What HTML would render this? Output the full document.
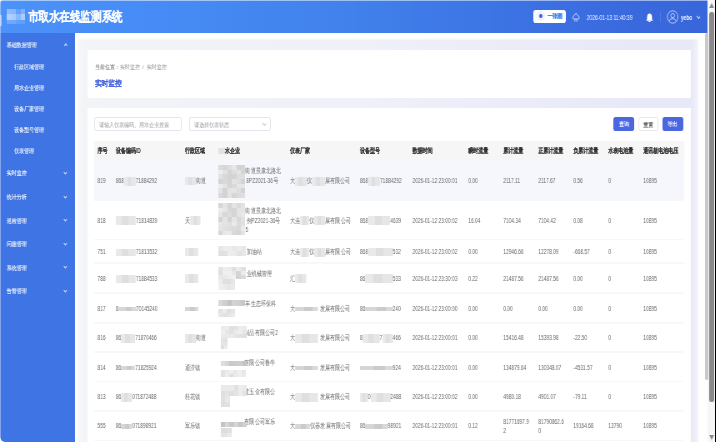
<!DOCTYPE html>
<html><head><meta charset="utf-8"><style>
*{margin:0;padding:0;box-sizing:border-box}
html,body{width:716px;height:442px;overflow:hidden;background:#fff;font-family:"Liberation Sans",sans-serif}
#wrap{position:absolute;left:0;top:0;width:859.2px;height:442px;transform:scaleX(0.833333);transform-origin:0 0;overflow:hidden;will-change:transform}
#wrap div{position:absolute}
#wrap div div{position:static}
svg{display:block}
.txt{white-space:nowrap}
#hdr{border-top-left-radius:4px;background:linear-gradient(90deg,#4b92f9 0%,#478cf6 22%,#4181eb 50%,#3c72e3 74%,#3a69de 90%,#3866db 100%)}
.title{font-size:12.5px;line-height:16px;letter-spacing:-0.45px;-webkit-text-stroke:0.12px #fff;color:#fff;white-space:nowrap;font-weight:bold}
.mi,.si{font-size:5.8px;line-height:10px;color:#fff;white-space:nowrap;-webkit-text-stroke:0.12px rgba(255,255,255,.7)}
.car{border-right:0.65px solid #d0dcfa;border-bottom:0.65px solid #d0dcfa;transform:rotate(45deg)}
.car.up{transform:rotate(225deg)}
.bc{font-size:5.8px;line-height:9px;color:#8e9196;white-space:nowrap}
.bc b{color:#5a5c60;font-weight:normal}
.pt{font-size:8.4px;line-height:10px;color:#4a66de;font-weight:bold;white-space:nowrap;-webkit-text-stroke:0.08px #4a66de}
.inp{border:0.7px solid #e2e5eb;border-radius:2.4px;background:#fff;font-size:5.7px;line-height:12.6px;color:#a4a7ad;-webkit-text-stroke:0.05px #a4a7ad;padding-left:5.4px;padding-top:0.6px;white-space:nowrap}
.btn{border-radius:2.8px;font-size:6px;line-height:15.6px;text-align:center;color:#fff;background:#4a67e0;-webkit-text-stroke:0.12px #fff}
.btn.w{background:#fff;color:#555;border:0.7px solid #e6e8ee;line-height:14.2px;color:#3a3a3a;-webkit-text-stroke:0.08px #3a3a3a}
.th,.td{display:flex;align-items:center;font-size:6.6px;line-height:9.7px;white-space:nowrap}
.th>div,.td>div{transform:scaleX(0.88);transform-origin:0 50%}
.th>div{transform:scaleX(0.86)}
.th{color:#303133;font-weight:bold;-webkit-text-stroke:0.04px #303133}
.td{color:#68696c}
.bl{display:inline-block;vertical-align:middle;background:#e2e2e2}
.bx{display:inline-block;vertical-align:middle;background:linear-gradient(90deg,#e9e9ea 0 30%,#dedfe0 30% 62%,#e6e6e7 62%)}
.bd{display:inline-block;vertical-align:middle;background:linear-gradient(90deg,#d6d6d8 0 40%,#cbcbcd 40% 75%,#d9d9db 75%)}
.rl{background:#f8f8f9}
.arr{width:0;height:0;border-left:3.12px solid transparent;border-right:3.12px solid transparent}
</style></head><body><div id="wrap">
<div style="left:0.0px;top:0px;width:849.0px;height:32.5px;"></div>
<div id="hdr" style="left:0;top:0;width:849.0px;height:32.5px"></div>
<div style="left:8.4px;top:9.2px;width:5.4px;height:4.7px;background:#8cbafc"></div><div style="left:13.8px;top:9.2px;width:5.4px;height:4.7px;background:#8ab8fc"></div><div style="left:19.2px;top:9.2px;width:5.4px;height:4.7px;background:#62a0f9"></div><div style="left:24.6px;top:9.2px;width:5.4px;height:4.7px;background:#80b2fb"></div><div style="left:8.4px;top:13.9px;width:5.4px;height:5.7px;background:#b0d0fe"></div><div style="left:13.8px;top:13.9px;width:5.4px;height:5.7px;background:#a6cafd"></div><div style="left:19.2px;top:13.9px;width:5.4px;height:5.7px;background:#88b7fb"></div><div style="left:24.6px;top:13.9px;width:5.4px;height:5.7px;background:#aacdfd"></div><div style="left:8.4px;top:19.6px;width:5.4px;height:4.9px;background:#72a8f9"></div><div style="left:13.8px;top:19.6px;width:5.4px;height:4.9px;background:#70a7f9"></div><div style="left:19.2px;top:19.6px;width:5.4px;height:4.9px;background:#62a0f9"></div><div style="left:24.6px;top:19.6px;width:5.4px;height:4.9px;background:#5f9ef9"></div><div style="left:0.0px;top:15px;width:2.4px;height:11px;background:#a0c4fb"></div>
<div class="title" style="left:33.72px;top:8.9px;height:16px;">市取水在线监测系统</div>
<div style="left:0.0px;top:0px;width:859.2px;height:0.8px;background:rgba(255,255,255,.5)"></div>
<div style="left:639.6px;top:9.6px;width:39.6px;height:13.6px;background:#fff;border-radius:2.8px"></div>
<div style="left:643.8px;top:11.2px;width:10.08px;height:10.2px;border-radius:50%;background:#f0f2fc"></div>
<div style="left:646.8px;top:14.1px;width:4.08px;height:4.4px;border-radius:50%;background:#4a5cdb"></div>
<div class="txt" style="left:656.76px;top:11.7px;height:9px;font-size:6px;line-height:9px;color:#3f86f0;font-weight:bold;-webkit-text-stroke:0.1px #3f86f0">一张图</div>
<div style="left:686.4px;top:12px;width:10.8px;height:11px"><svg width="10.8" height="11" viewBox="0 0 9 11" preserveAspectRatio="none"><path d="M4.3 1.3 L1.7 4.3 Q0.8 5.3 1.1 6.2 Q1.5 7.1 2.5 7.1 L6.2 7.1 Q7.3 7.1 7.6 6.2 Q7.9 5.3 6.9 4.3 Z" fill="none" stroke="#e3ebff" stroke-width="0.8" stroke-linejoin="round"/><path d="M3.1 7.3v2.5M4.35 7.3v2.5M5.6 7.3v2.5" stroke="#cfdcff" stroke-width="0.55"/></svg></div>
<div class="txt" style="left:703.92px;top:12.5px;height:9px;font-size:6.6px;line-height:9px;color:#f2f6ff;transform:scaleX(0.905);transform-origin:0 50%">2026-01-13 11:40:39</div>
<div style="left:768.6px;top:12px;width:0.6px;height:10px;background:rgba(255,255,255,.04)"></div>
<div style="left:774.96px;top:12.6px;width:8.88px;height:9.6px"><svg width="8.88" height="9.6" viewBox="0 0 8 10" preserveAspectRatio="none"><path d="M4 0.6 Q1.5 0.8 1.4 4 L1.2 6.9 L0.3 8 L7.7 8 L6.8 6.9 L6.6 4 Q6.5 0.8 4 0.6Z" fill="#fff"/><ellipse cx="4" cy="9" rx="1.1" ry="0.9" fill="#fff"/></svg></div>
<div style="left:792.24px;top:12px;width:0.6px;height:10px;background:rgba(255,255,255,.12)"></div>
<div style="left:799.92px;top:9.9px;width:14.4px;height:14px"><svg width="14.4" height="14" viewBox="0 0 12 14" preserveAspectRatio="none"><ellipse cx="6" cy="7" rx="5.3" ry="6.2" fill="none" stroke="#e3ebff" stroke-width="0.65"/><ellipse cx="6" cy="5.6" rx="1.9" ry="2.1" fill="none" stroke="#e3ebff" stroke-width="0.65"/><path d="M2.6 11 Q3 8.6 6 8.6 Q9 8.6 9.4 11" fill="none" stroke="#e3ebff" stroke-width="0.65"/></svg></div>
<div class="txt" style="left:816.96px;top:12.5px;height:9px;font-size:6.6px;line-height:9px;color:#f2f6ff;font-weight:bold;transform:scaleX(0.88);transform-origin:0 50%">yebo</div>
<div style="left:835.92px;top:14.6px;width:3.84px;height:3.2px;border-right:0.5px solid #c9d6fb;border-bottom:0.5px solid #c9d6fb;transform:rotate(45deg)"></div>
<div style="left:0.0px;top:32.5px;width:89.7px;height:410px;background:#3e74e4"></div>
<div class="mi" style="left:8.4px;top:40px;height:10px;">基础数据管理</div>
<div class="car up" style="left:77.04px;top:44px;width:3.36px;height:2.8px;"></div>
<div class="si" style="left:16.8px;top:61.599999999999994px;height:10px;">行政区域管理</div>
<div class="si" style="left:16.8px;top:82.7px;height:10px;">用水企业管理</div>
<div class="si" style="left:16.8px;top:103.8px;height:10px;">设备厂家管理</div>
<div class="si" style="left:16.8px;top:124.9px;height:10px;">设备型号管理</div>
<div class="si" style="left:16.8px;top:145.5px;height:10px;">仪表管理</div>
<div class="mi" style="left:8.4px;top:168.2px;height:10px;">实时监控</div>
<div class="car" style="left:77.16px;top:170.79999999999998px;width:3.12px;height:2.6px;"></div>
<div class="mi" style="left:8.4px;top:192px;height:10px;">统计分析</div>
<div class="car" style="left:77.16px;top:194.6px;width:3.12px;height:2.6px;"></div>
<div class="mi" style="left:8.4px;top:215.6px;height:10px;">巡检管理</div>
<div class="car" style="left:77.16px;top:218.2px;width:3.12px;height:2.6px;"></div>
<div class="mi" style="left:8.4px;top:239px;height:10px;">问题管理</div>
<div class="car" style="left:77.16px;top:241.6px;width:3.12px;height:2.6px;"></div>
<div class="mi" style="left:8.4px;top:262.5px;height:10px;">系统管理</div>
<div class="car" style="left:77.16px;top:265.1px;width:3.12px;height:2.6px;"></div>
<div class="mi" style="left:8.4px;top:286.1px;height:10px;">告警管理</div>
<div class="car" style="left:77.16px;top:288.70000000000005px;width:3.12px;height:2.6px;"></div>
<div style="left:0.0px;top:0px;width:1.2px;height:442px;background:rgba(255,255,255,.38)"></div>
<div style="left:0;top:438px;width:4.8px;height:4px;background:radial-gradient(ellipse 4.8px 4px at 100% 0,rgba(255,255,255,0) 80%,#fff 100%)"></div>
<div style="left:92.16px;top:38.3px;width:745.44px;height:410px;background:linear-gradient(180deg,#fff 0,rgba(255,255,255,0) 2.6px),linear-gradient(90deg,#fff 0,#f6f7f9 3px,#f3f4f7 9px,#f0f1f8 40%,#e7e8f8 98.8%,#f4f4fb 100%)"></div>
<div style="left:105.12px;top:49.8px;width:723.6px;height:48px;background:#fff"></div>
<div style="left:105.12px;top:107.5px;width:723.6px;height:340px;background:#fff"></div>
<div class="bc" style="left:113.64px;top:63.1px;height:9px;"><b>当前位置：</b>实时监控 &nbsp;/ &nbsp;实时监控</div>
<div class="pt" style="left:113.64px;top:78.4px;height:10px;">实时监控</div>
<div class="inp" style="left:113.04px;top:117.3px;width:105.24px;height:14px;">请输入仪表编码、用水企业搜索</div>
<div class="inp" style="left:227.04px;top:117.3px;width:97.56px;height:14px;">请选择仪表状态</div>
<div style="left:314.76px;top:121.6px;width:3.6px;height:3px;border-right:0.5px solid #c4c7cd;border-bottom:0.5px solid #c4c7cd;transform:rotate(45deg)"></div>
<div class="btn" style="left:736.2px;top:117.3px;width:25.2px;height:13.8px;">查询</div>
<div class="btn w" style="left:765.72px;top:117.3px;width:24.72px;height:13.8px;">重置</div>
<div class="btn" style="left:794.88px;top:117.3px;width:25.2px;height:13.8px;">导出</div>
<div style="left:113.04px;top:140.8px;width:708.0px;height:19.4px;background:#f6f6f6"></div>
<div style="left:113.04px;top:160.2px;width:708.0px;height:40.1px;background:#f5f7fc"></div>
<div class="rl" style="left:113.04px;top:199.5px;width:708.0px;height:1.6px;"></div>
<div class="rl" style="left:113.04px;top:238.5px;width:708.0px;height:1.6px;"></div>
<div class="rl" style="left:113.04px;top:262.2px;width:708.0px;height:1.6px;"></div>
<div class="rl" style="left:113.04px;top:292.0px;width:708.0px;height:1.6px;"></div>
<div class="rl" style="left:113.04px;top:322.09999999999997px;width:708.0px;height:1.6px;"></div>
<div class="rl" style="left:113.04px;top:351.4px;width:708.0px;height:1.6px;"></div>
<div class="rl" style="left:113.04px;top:380.8px;width:708.0px;height:1.6px;"></div>
<div class="rl" style="left:113.04px;top:410.09999999999997px;width:708.0px;height:1.6px;"></div>
<div class="rl" style="left:113.04px;top:439.8px;width:708.0px;height:1.6px;"></div>
<div class="th" style="left:117.0px;top:141.4px;height:19.399999999999977px;"><div>序号</div></div>
<div class="th" style="left:138.84px;top:141.4px;height:19.399999999999977px;"><div>设备编码ID</div></div>
<div class="th" style="left:222.0px;top:141.4px;height:19.399999999999977px;"><div>行政区域</div></div>
<div class="th" style="left:261.6px;top:141.4px;height:19.399999999999977px;"><div><span class="bl" style="width:9.545px;height:6px"></span>水企业</div></div>
<div class="th" style="left:348.36px;top:141.4px;height:19.399999999999977px;"><div>仪表厂家</div></div>
<div class="th" style="left:432.24px;top:141.4px;height:19.399999999999977px;"><div>设备型号</div></div>
<div class="th" style="left:495.24px;top:141.4px;height:19.399999999999977px;"><div>数据时间</div></div>
<div class="th" style="left:562.44px;top:141.4px;height:19.399999999999977px;"><div>瞬时流量</div></div>
<div class="th" style="left:604.08px;top:141.4px;height:19.399999999999977px;"><div>累计流量</div></div>
<div class="th" style="left:646.44px;top:141.4px;height:19.399999999999977px;"><div>正累计流量</div></div>
<div class="th" style="left:688.08px;top:141.4px;height:19.399999999999977px;"><div>负累计流量</div></div>
<div class="th" style="left:730.08px;top:141.4px;height:19.399999999999977px;"><div>水表电池量</div></div>
<div class="th" style="left:772.44px;top:141.4px;height:19.399999999999977px;"><div>通讯板电池电压</div></div>
<div class="td" style="left:117.0px;top:160.79999999999998px;height:40.10000000000002px;"><div>819</div></div>
<div class="td" style="left:138.84px;top:160.79999999999998px;height:40.10000000000002px;"><div>868<span class="bx" style="width:15.955px;height:9px"></span>71884292</div></div>
<div class="td" style="left:222.0px;top:160.79999999999998px;height:40.10000000000002px;"><div><span class="bx" style="width:15.000px;height:8px"></span>街道</div></div>
<div class="td" style="left:261.6px;top:160.79999999999998px;height:40.10000000000002px;"><div><span style="display:inline-block;width:36.818px"></span>街道景康北路北<br><span style="display:inline-block;width:38.182px"></span>8PZ2021-36号<br><span style="display:inline-block;width:30.000px"></span></div></div>
<div class="td" style="left:348.36px;top:160.79999999999998px;height:40.10000000000002px;"><div>大<span class="bx" style="width:15.818px;height:9px"></span>仪<span class="bx" style="width:17.727px;height:9px"></span>展有限公司</div></div>
<div class="td" style="left:432.24px;top:160.79999999999998px;height:40.10000000000002px;"><div>868<span class="bx" style="width:16.364px;height:9px"></span>71884292</div></div>
<div class="td" style="left:495.24px;top:160.79999999999998px;height:40.10000000000002px;"><div>2026-01-12 23:00:01</div></div>
<div class="td" style="left:562.44px;top:160.79999999999998px;height:40.10000000000002px;"><div>0.00</div></div>
<div class="td" style="left:604.08px;top:160.79999999999998px;height:40.10000000000002px;"><div>2117.11</div></div>
<div class="td" style="left:646.44px;top:160.79999999999998px;height:40.10000000000002px;"><div>2117.67</div></div>
<div class="td" style="left:688.08px;top:160.79999999999998px;height:40.10000000000002px;"><div>0.56</div></div>
<div class="td" style="left:730.08px;top:160.79999999999998px;height:40.10000000000002px;"><div>0</div></div>
<div class="td" style="left:772.44px;top:160.79999999999998px;height:40.10000000000002px;"><div>10895</div></div>
<div class="td" style="left:117.0px;top:200.9px;height:39.0px;"><div>818</div></div>
<div class="td" style="left:138.84px;top:200.9px;height:39.0px;"><div><span class="bx" style="width:27.273px;height:9px"></span>71814839</div></div>
<div class="td" style="left:222.0px;top:200.9px;height:39.0px;"><div>天<span class="bx" style="width:13.636px;height:9px"></span></div></div>
<div class="td" style="left:261.6px;top:200.9px;height:39.0px;"><div><span style="display:inline-block;width:36.818px"></span>街道景康北路北<br><span style="display:inline-block;width:38.182px"></span>例PZ2021-36号<br><span style="display:inline-block;width:36.818px"></span>5</div></div>
<div class="td" style="left:348.36px;top:200.9px;height:39.0px;"><div>大连<span class="bx" style="width:12.273px;height:9px"></span>仪<span class="bx" style="width:14.591px;height:9px"></span>展有限公司</div></div>
<div class="td" style="left:432.24px;top:200.9px;height:39.0px;"><div>868<span class="bx" style="width:30.273px;height:9px"></span>4639</div></div>
<div class="td" style="left:495.24px;top:200.9px;height:39.0px;"><div>2026-01-12 23:00:02</div></div>
<div class="td" style="left:562.44px;top:200.9px;height:39.0px;"><div>16.04</div></div>
<div class="td" style="left:604.08px;top:200.9px;height:39.0px;"><div>7104.34</div></div>
<div class="td" style="left:646.44px;top:200.9px;height:39.0px;"><div>7104.42</div></div>
<div class="td" style="left:688.08px;top:200.9px;height:39.0px;"><div>0.08</div></div>
<div class="td" style="left:730.08px;top:200.9px;height:39.0px;"><div>0</div></div>
<div class="td" style="left:772.44px;top:200.9px;height:39.0px;"><div>10895</div></div>
<div class="td" style="left:117.0px;top:239.9px;height:23.69999999999999px;"><div>751</div></div>
<div class="td" style="left:138.84px;top:239.9px;height:23.69999999999999px;"><div><span class="bx" style="width:27.273px;height:7px"></span>71813532</div></div>
<div class="td" style="left:222.0px;top:239.9px;height:23.69999999999999px;"><div><span class="bx" style="width:17.727px;height:8px"></span></div></div>
<div class="td" style="left:261.6px;top:239.9px;height:23.69999999999999px;"><div><span style="display:inline-block;width:38.182px"></span>加油站</div></div>
<div class="td" style="left:348.36px;top:239.9px;height:23.69999999999999px;"><div>大连<span class="bx" style="width:12.273px;height:9px"></span>仪<span class="bx" style="width:14.591px;height:9px"></span>展有限公司</div></div>
<div class="td" style="left:432.24px;top:239.9px;height:23.69999999999999px;"><div>868<span class="bx" style="width:33.682px;height:8px"></span>532</div></div>
<div class="td" style="left:495.24px;top:239.9px;height:23.69999999999999px;"><div>2026-01-12 23:00:02</div></div>
<div class="td" style="left:562.44px;top:239.9px;height:23.69999999999999px;"><div>0.00</div></div>
<div class="td" style="left:604.08px;top:239.9px;height:23.69999999999999px;"><div>12946.66</div></div>
<div class="td" style="left:646.44px;top:239.9px;height:23.69999999999999px;"><div>12278.09</div></div>
<div class="td" style="left:688.08px;top:239.9px;height:23.69999999999999px;"><div>-668.57</div></div>
<div class="td" style="left:730.08px;top:239.9px;height:23.69999999999999px;"><div>0</div></div>
<div class="td" style="left:772.44px;top:239.9px;height:23.69999999999999px;"><div>10895</div></div>
<div class="td" style="left:117.0px;top:263.6px;height:29.80000000000001px;"><div>788</div></div>
<div class="td" style="left:138.84px;top:263.6px;height:29.80000000000001px;"><div><span class="bx" style="width:27.273px;height:8px"></span>71884533</div></div>
<div class="td" style="left:222.0px;top:263.6px;height:29.80000000000001px;"><div><span class="bx" style="width:17.727px;height:9px"></span></div></div>
<div class="td" style="left:261.6px;top:263.6px;height:29.80000000000001px;"><div><span style="display:inline-block;width:38.182px"></span>业机械管理<br><span style="display:inline-block;width:23.182px"></span></div></div>
<div class="td" style="left:348.36px;top:263.6px;height:29.80000000000001px;"><div>汇<span class="bx" style="width:15.000px;height:9px"></span></div></div>
<div class="td" style="left:432.24px;top:263.6px;height:29.80000000000001px;"><div>86<span class="bx" style="width:37.364px;height:9px"></span>533</div></div>
<div class="td" style="left:495.24px;top:263.6px;height:29.80000000000001px;"><div>2026-01-12 23:30:03</div></div>
<div class="td" style="left:562.44px;top:263.6px;height:29.80000000000001px;"><div>0.22</div></div>
<div class="td" style="left:604.08px;top:263.6px;height:29.80000000000001px;"><div>21487.56</div></div>
<div class="td" style="left:646.44px;top:263.6px;height:29.80000000000001px;"><div>21487.56</div></div>
<div class="td" style="left:688.08px;top:263.6px;height:29.80000000000001px;"><div>0.00</div></div>
<div class="td" style="left:730.08px;top:263.6px;height:29.80000000000001px;"><div>0</div></div>
<div class="td" style="left:772.44px;top:263.6px;height:29.80000000000001px;"><div>10895</div></div>
<div class="td" style="left:117.0px;top:293.40000000000003px;height:30.099999999999966px;"><div>817</div></div>
<div class="td" style="left:138.84px;top:293.40000000000003px;height:30.099999999999966px;"><div>8<span class="bd" style="width:23.864px;height:4.5px"></span>70145240</div></div>
<div class="td" style="left:222.0px;top:293.40000000000003px;height:30.099999999999966px;"><div><span class="bd" style="width:17.727px;height:4.5px"></span></div></div>
<div class="td" style="left:261.6px;top:293.40000000000003px;height:30.099999999999966px;"><div><span style="display:inline-block;width:36.818px"></span>丰生态环保科<br><span style="display:inline-block;width:16.364px"></span></div></div>
<div class="td" style="left:348.36px;top:293.40000000000003px;height:30.099999999999966px;"><div>大<span class="bd" style="width:31.364px;height:4.5px"></span><span style="display:inline-block;width:2.045px"></span>发展有限公司</div></div>
<div class="td" style="left:432.24px;top:293.40000000000003px;height:30.099999999999966px;"><div>86<span class="bd" style="width:37.364px;height:4.5px"></span>240</div></div>
<div class="td" style="left:495.24px;top:293.40000000000003px;height:30.099999999999966px;"><div>2026-01-12 23:00:00</div></div>
<div class="td" style="left:562.44px;top:293.40000000000003px;height:30.099999999999966px;"><div>0.00</div></div>
<div class="td" style="left:604.08px;top:293.40000000000003px;height:30.099999999999966px;"><div>0.00</div></div>
<div class="td" style="left:646.44px;top:293.40000000000003px;height:30.099999999999966px;"><div>0.00</div></div>
<div class="td" style="left:688.08px;top:293.40000000000003px;height:30.099999999999966px;"><div>0.00</div></div>
<div class="td" style="left:730.08px;top:293.40000000000003px;height:30.099999999999966px;"><div>0</div></div>
<div class="td" style="left:772.44px;top:293.40000000000003px;height:30.099999999999966px;"><div>10895</div></div>
<div class="td" style="left:117.0px;top:323.5px;height:29.30000000000001px;"><div>816</div></div>
<div class="td" style="left:138.84px;top:323.5px;height:29.30000000000001px;"><div>86<span class="bx" style="width:19.091px;height:9px"></span>71870466</div></div>
<div class="td" style="left:222.0px;top:323.5px;height:29.30000000000001px;"><div><span class="bx" style="width:15.000px;height:9px"></span>街道</div></div>
<div class="td" style="left:261.6px;top:323.5px;height:29.30000000000001px;"><div><span style="display:inline-block;width:35.455px"></span>制品有限公司2<br><span style="display:inline-block;width:9.545px"></span></div></div>
<div class="td" style="left:348.36px;top:323.5px;height:29.30000000000001px;"><div>大<span class="bx" style="width:31.364px;height:9px"></span><span style="display:inline-block;width:2.045px"></span>发展有限公司</div></div>
<div class="td" style="left:432.24px;top:323.5px;height:29.30000000000001px;"><div>8<span class="bx" style="width:23.182px;height:9px"></span>7<span class="bx" style="width:14.182px;height:9px"></span>466</div></div>
<div class="td" style="left:495.24px;top:323.5px;height:29.30000000000001px;"><div>2026-01-12 23:00:01</div></div>
<div class="td" style="left:562.44px;top:323.5px;height:29.30000000000001px;"><div>0.00</div></div>
<div class="td" style="left:604.08px;top:323.5px;height:29.30000000000001px;"><div>15416.48</div></div>
<div class="td" style="left:646.44px;top:323.5px;height:29.30000000000001px;"><div>15393.98</div></div>
<div class="td" style="left:688.08px;top:323.5px;height:29.30000000000001px;"><div>-22.50</div></div>
<div class="td" style="left:730.08px;top:323.5px;height:29.30000000000001px;"><div>0</div></div>
<div class="td" style="left:772.44px;top:323.5px;height:29.30000000000001px;"><div>10895</div></div>
<div class="td" style="left:117.0px;top:352.8px;height:29.400000000000034px;"><div>814</div></div>
<div class="td" style="left:138.84px;top:352.8px;height:29.400000000000034px;"><div>86<span class="bd" style="width:19.091px;height:4.5px"></span>71825924</div></div>
<div class="td" style="left:222.0px;top:352.8px;height:29.400000000000034px;"><div>通济镇</div></div>
<div class="td" style="left:261.6px;top:352.8px;height:29.400000000000034px;"><div><span style="display:inline-block;width:35.455px"></span>有限公司鲁牛<br><span style="display:inline-block;width:34.091px"></span></div></div>
<div class="td" style="left:348.36px;top:352.8px;height:29.400000000000034px;"><div>大<span class="bd" style="width:31.364px;height:4.5px"></span><span style="display:inline-block;width:2.045px"></span>发展有限公司</div></div>
<div class="td" style="left:432.24px;top:352.8px;height:29.400000000000034px;"><div><span class="bd" style="width:44.727px;height:4.5px"></span>924</div></div>
<div class="td" style="left:495.24px;top:352.8px;height:29.400000000000034px;"><div>2026-01-12 23:00:01</div></div>
<div class="td" style="left:562.44px;top:352.8px;height:29.400000000000034px;"><div>0.00</div></div>
<div class="td" style="left:604.08px;top:352.8px;height:29.400000000000034px;"><div>134879.64</div></div>
<div class="td" style="left:646.44px;top:352.8px;height:29.400000000000034px;"><div>130348.07</div></div>
<div class="td" style="left:688.08px;top:352.8px;height:29.400000000000034px;"><div>-4531.57</div></div>
<div class="td" style="left:730.08px;top:352.8px;height:29.400000000000034px;"><div>0</div></div>
<div class="td" style="left:772.44px;top:352.8px;height:29.400000000000034px;"><div>10895</div></div>
<div class="td" style="left:117.0px;top:382.20000000000005px;height:29.299999999999955px;"><div>813</div></div>
<div class="td" style="left:138.84px;top:382.20000000000005px;height:29.299999999999955px;"><div>86<span class="bx" style="width:15.000px;height:9px"></span>071872488</div></div>
<div class="td" style="left:222.0px;top:382.20000000000005px;height:29.299999999999955px;"><div>桂花镇</div></div>
<div class="td" style="left:261.6px;top:382.20000000000005px;height:29.299999999999955px;"><div><span style="display:inline-block;width:35.455px"></span>建五金有限公<br><span style="display:inline-block;width:12.273px"></span></div></div>
<div class="td" style="left:348.36px;top:382.20000000000005px;height:29.299999999999955px;"><div>大<span class="bx" style="width:31.364px;height:9px"></span><span style="display:inline-block;width:2.045px"></span>发展有限公司</div></div>
<div class="td" style="left:432.24px;top:382.20000000000005px;height:29.299999999999955px;"><div><span class="bx" style="width:10.909px;height:9px"></span>0<span class="bx" style="width:27.000px;height:9px"></span>2488</div></div>
<div class="td" style="left:495.24px;top:382.20000000000005px;height:29.299999999999955px;"><div>2026-01-12 23:00:02</div></div>
<div class="td" style="left:562.44px;top:382.20000000000005px;height:29.299999999999955px;"><div>0.00</div></div>
<div class="td" style="left:604.08px;top:382.20000000000005px;height:29.299999999999955px;"><div>4980.18</div></div>
<div class="td" style="left:646.44px;top:382.20000000000005px;height:29.299999999999955px;"><div>4901.07</div></div>
<div class="td" style="left:688.08px;top:382.20000000000005px;height:29.299999999999955px;"><div>-79.11</div></div>
<div class="td" style="left:730.08px;top:382.20000000000005px;height:29.299999999999955px;"><div>0</div></div>
<div class="td" style="left:772.44px;top:382.20000000000005px;height:29.299999999999955px;"><div>10895</div></div>
<div class="td" style="left:117.0px;top:411.5px;height:29.700000000000045px;"><div>555</div></div>
<div class="td" style="left:138.84px;top:411.5px;height:29.700000000000045px;"><div>86<span class="bd" style="width:15.000px;height:4.5px"></span>071898921</div></div>
<div class="td" style="left:222.0px;top:411.5px;height:29.700000000000045px;"><div>军乐镇</div></div>
<div class="td" style="left:261.6px;top:411.5px;height:29.700000000000045px;"><div><span style="display:inline-block;width:35.455px"></span>有限公司军乐<br><span style="display:inline-block;width:15.000px"></span></div></div>
<div class="td" style="left:348.36px;top:411.5px;height:29.700000000000045px;"><div>大<span class="bd" style="width:20.455px;height:4.5px"></span>仪器发展有限公司</div></div>
<div class="td" style="left:432.24px;top:411.5px;height:29.700000000000045px;"><div>86<span class="bd" style="width:30.545px;height:4.5px"></span>98921</div></div>
<div class="td" style="left:495.24px;top:411.5px;height:29.700000000000045px;"><div>2026-01-12 23:00:01</div></div>
<div class="td" style="left:562.44px;top:411.5px;height:29.700000000000045px;"><div>0.12</div></div>
<div class="td" style="left:604.08px;top:411.5px;height:29.700000000000045px;"><div>81771697.9<br>2</div></div>
<div class="td" style="left:646.44px;top:411.5px;height:29.700000000000045px;"><div>81790862.6<br>0</div></div>
<div class="td" style="left:688.08px;top:411.5px;height:29.700000000000045px;"><div>19164.68</div></div>
<div class="td" style="left:730.08px;top:411.5px;height:29.700000000000045px;"><div>13790</div></div>
<div class="td" style="left:772.44px;top:411.5px;height:29.700000000000045px;"><div>10895</div></div>
<div style="left:261.6px;top:165.4px;width:32.4px;height:32.6px"><svg width="32.4" height="32.6" viewBox="0 0 6 7" preserveAspectRatio="none" shape-rendering="crispEdges"><rect x="0" y="0" width="1.02" height="1.02" fill="rgb(220,220,221)"/><rect x="1" y="0" width="1.02" height="1.02" fill="rgb(214,214,215)"/><rect x="2" y="0" width="1.02" height="1.02" fill="rgb(222,222,223)"/><rect x="3" y="0" width="1.02" height="1.02" fill="rgb(230,230,231)"/><rect x="4" y="0" width="1.02" height="1.02" fill="rgb(211,211,212)"/><rect x="5" y="0" width="1.02" height="1.02" fill="rgb(212,212,213)"/><rect x="0" y="1" width="1.02" height="1.02" fill="rgb(236,236,237)"/><rect x="1" y="1" width="1.02" height="1.02" fill="rgb(227,227,228)"/><rect x="2" y="1" width="1.02" height="1.02" fill="rgb(213,213,214)"/><rect x="3" y="1" width="1.02" height="1.02" fill="rgb(221,221,222)"/><rect x="4" y="1" width="1.02" height="1.02" fill="rgb(228,228,229)"/><rect x="5" y="1" width="1.02" height="1.02" fill="rgb(211,211,212)"/><rect x="0" y="2" width="1.02" height="1.02" fill="rgb(226,226,227)"/><rect x="1" y="2" width="1.02" height="1.02" fill="rgb(216,216,217)"/><rect x="2" y="2" width="1.02" height="1.02" fill="rgb(211,211,212)"/><rect x="3" y="2" width="1.02" height="1.02" fill="rgb(212,212,213)"/><rect x="4" y="2" width="1.02" height="1.02" fill="rgb(223,223,224)"/><rect x="5" y="2" width="1.02" height="1.02" fill="rgb(223,223,224)"/><rect x="0" y="3" width="1.02" height="1.02" fill="rgb(212,212,213)"/><rect x="1" y="3" width="1.02" height="1.02" fill="rgb(217,217,218)"/><rect x="2" y="3" width="1.02" height="1.02" fill="rgb(212,212,213)"/><rect x="3" y="3" width="1.02" height="1.02" fill="rgb(227,227,228)"/><rect x="4" y="3" width="1.02" height="1.02" fill="rgb(223,223,224)"/><rect x="5" y="3" width="1.02" height="1.02" fill="rgb(211,211,212)"/><rect x="0" y="4" width="1.02" height="1.02" fill="rgb(236,236,237)"/><rect x="1" y="4" width="1.02" height="1.02" fill="rgb(228,228,229)"/><rect x="2" y="4" width="1.02" height="1.02" fill="rgb(213,213,214)"/><rect x="3" y="4" width="1.02" height="1.02" fill="rgb(217,217,218)"/><rect x="4" y="4" width="1.02" height="1.02" fill="rgb(230,230,231)"/><rect x="5" y="4" width="1.02" height="1.02" fill="rgb(230,230,231)"/><rect x="0" y="5" width="1.02" height="1.02" fill="rgb(228,228,229)"/><rect x="1" y="5" width="1.02" height="1.02" fill="rgb(211,211,212)"/><rect x="2" y="5" width="1.02" height="1.02" fill="rgb(228,228,229)"/><rect x="3" y="5" width="1.02" height="1.02" fill="rgb(228,228,229)"/><rect x="4" y="5" width="1.02" height="1.02" fill="rgb(222,222,223)"/><rect x="5" y="5" width="1.02" height="1.02" fill="rgb(211,211,212)"/><rect x="0" y="6" width="1.02" height="1.02" fill="rgb(217,217,218)"/><rect x="1" y="6" width="1.02" height="1.02" fill="rgb(211,211,212)"/><rect x="2" y="6" width="1.02" height="1.02" fill="rgb(227,227,228)"/><rect x="3" y="6" width="1.02" height="1.02" fill="rgb(214,214,215)"/><rect x="4" y="6" width="1.02" height="1.02" fill="rgb(219,219,220)"/><rect x="5" y="6" width="1.02" height="1.02" fill="rgb(223,223,224)"/></svg></div><div style="left:261.6px;top:202.5px;width:32.4px;height:32.5px"><svg width="32.4" height="32.5" viewBox="0 0 6 7" preserveAspectRatio="none" shape-rendering="crispEdges"><rect x="0" y="0" width="1.02" height="1.02" fill="rgb(214,214,215)"/><rect x="1" y="0" width="1.02" height="1.02" fill="rgb(227,227,228)"/><rect x="2" y="0" width="1.02" height="1.02" fill="rgb(213,213,214)"/><rect x="3" y="0" width="1.02" height="1.02" fill="rgb(228,228,229)"/><rect x="4" y="0" width="1.02" height="1.02" fill="rgb(219,219,220)"/><rect x="5" y="0" width="1.02" height="1.02" fill="rgb(227,227,228)"/><rect x="0" y="1" width="1.02" height="1.02" fill="rgb(236,236,237)"/><rect x="1" y="1" width="1.02" height="1.02" fill="rgb(231,231,232)"/><rect x="2" y="1" width="1.02" height="1.02" fill="rgb(215,215,216)"/><rect x="3" y="1" width="1.02" height="1.02" fill="rgb(213,213,214)"/><rect x="4" y="1" width="1.02" height="1.02" fill="rgb(228,228,229)"/><rect x="5" y="1" width="1.02" height="1.02" fill="rgb(228,228,229)"/><rect x="0" y="2" width="1.02" height="1.02" fill="rgb(230,230,231)"/><rect x="1" y="2" width="1.02" height="1.02" fill="rgb(216,216,217)"/><rect x="2" y="2" width="1.02" height="1.02" fill="rgb(221,221,222)"/><rect x="3" y="2" width="1.02" height="1.02" fill="rgb(213,213,214)"/><rect x="4" y="2" width="1.02" height="1.02" fill="rgb(227,227,228)"/><rect x="5" y="2" width="1.02" height="1.02" fill="rgb(232,232,233)"/><rect x="0" y="3" width="1.02" height="1.02" fill="rgb(212,212,213)"/><rect x="1" y="3" width="1.02" height="1.02" fill="rgb(228,228,229)"/><rect x="2" y="3" width="1.02" height="1.02" fill="rgb(211,211,212)"/><rect x="3" y="3" width="1.02" height="1.02" fill="rgb(229,229,230)"/><rect x="4" y="3" width="1.02" height="1.02" fill="rgb(216,216,217)"/><rect x="5" y="3" width="1.02" height="1.02" fill="rgb(225,225,226)"/><rect x="0" y="4" width="1.02" height="1.02" fill="rgb(231,231,232)"/><rect x="1" y="4" width="1.02" height="1.02" fill="rgb(227,227,228)"/><rect x="2" y="4" width="1.02" height="1.02" fill="rgb(223,223,224)"/><rect x="3" y="4" width="1.02" height="1.02" fill="rgb(234,234,235)"/><rect x="4" y="4" width="1.02" height="1.02" fill="rgb(220,220,221)"/><rect x="5" y="4" width="1.02" height="1.02" fill="rgb(224,224,225)"/><rect x="0" y="5" width="1.02" height="1.02" fill="rgb(228,228,229)"/><rect x="1" y="5" width="1.02" height="1.02" fill="rgb(224,224,225)"/><rect x="2" y="5" width="1.02" height="1.02" fill="rgb(221,221,222)"/><rect x="3" y="5" width="1.02" height="1.02" fill="rgb(219,219,220)"/><rect x="4" y="5" width="1.02" height="1.02" fill="rgb(217,217,218)"/><rect x="5" y="5" width="1.02" height="1.02" fill="rgb(235,235,236)"/><rect x="0" y="6" width="1.02" height="1.02" fill="rgb(215,215,216)"/><rect x="1" y="6" width="1.02" height="1.02" fill="rgb(232,232,233)"/><rect x="2" y="6" width="1.02" height="1.02" fill="rgb(234,234,235)"/><rect x="3" y="6" width="1.02" height="1.02" fill="rgb(217,217,218)"/><rect x="4" y="6" width="1.02" height="1.02" fill="rgb(212,212,213)"/><rect x="5" y="6" width="1.02" height="1.02" fill="rgb(228,228,229)"/></svg></div><div style="left:261.6px;top:246.3px;width:33.6px;height:9.9px"><svg width="33.6" height="9.9" viewBox="0 0 6 2" preserveAspectRatio="none" shape-rendering="crispEdges"><rect x="0" y="0" width="1.02" height="1.02" fill="rgb(231,231,232)"/><rect x="1" y="0" width="1.02" height="1.02" fill="rgb(238,238,239)"/><rect x="2" y="0" width="1.02" height="1.02" fill="rgb(237,237,238)"/><rect x="3" y="0" width="1.02" height="1.02" fill="rgb(232,232,233)"/><rect x="4" y="0" width="1.02" height="1.02" fill="rgb(236,236,237)"/><rect x="5" y="0" width="1.02" height="1.02" fill="rgb(231,231,232)"/><rect x="0" y="1" width="1.02" height="1.02" fill="rgb(224,224,225)"/><rect x="1" y="1" width="1.02" height="1.02" fill="rgb(225,225,226)"/><rect x="2" y="1" width="1.02" height="1.02" fill="rgb(238,238,239)"/><rect x="3" y="1" width="1.02" height="1.02" fill="rgb(235,235,236)"/><rect x="4" y="1" width="1.02" height="1.02" fill="rgb(227,227,228)"/><rect x="5" y="1" width="1.02" height="1.02" fill="rgb(232,232,233)"/></svg></div><div style="left:261.6px;top:267px;width:21.6px;height:12px"><svg width="21.6" height="12" viewBox="0 0 4 3" preserveAspectRatio="none" shape-rendering="crispEdges"><rect x="0" y="0" width="1.02" height="1.02" fill="rgb(226,226,227)"/><rect x="1" y="0" width="1.02" height="1.02" fill="rgb(237,237,238)"/><rect x="2" y="0" width="1.02" height="1.02" fill="rgb(235,235,236)"/><rect x="3" y="0" width="1.02" height="1.02" fill="rgb(223,223,224)"/><rect x="0" y="1" width="1.02" height="1.02" fill="rgb(224,224,225)"/><rect x="1" y="1" width="1.02" height="1.02" fill="rgb(239,239,240)"/><rect x="2" y="1" width="1.02" height="1.02" fill="rgb(240,240,241)"/><rect x="3" y="1" width="1.02" height="1.02" fill="rgb(232,232,233)"/><rect x="0" y="2" width="1.02" height="1.02" fill="rgb(232,232,233)"/><rect x="1" y="2" width="1.02" height="1.02" fill="rgb(233,233,234)"/><rect x="2" y="2" width="1.02" height="1.02" fill="rgb(237,237,238)"/><rect x="3" y="2" width="1.02" height="1.02" fill="rgb(240,240,241)"/></svg></div><div style="left:283.2px;top:267px;width:12.0px;height:12px"><svg width="12.0" height="12" viewBox="0 0 2 3" preserveAspectRatio="none" shape-rendering="crispEdges"><rect x="0" y="0" width="1.02" height="1.02" fill="rgb(235,235,236)"/><rect x="1" y="0" width="1.02" height="1.02" fill="rgb(224,224,225)"/><rect x="0" y="1" width="1.02" height="1.02" fill="rgb(212,212,213)"/><rect x="1" y="1" width="1.02" height="1.02" fill="rgb(236,236,237)"/><rect x="0" y="2" width="1.02" height="1.02" fill="rgb(212,212,213)"/><rect x="1" y="2" width="1.02" height="1.02" fill="rgb(218,218,219)"/></svg></div><div style="left:261.6px;top:279px;width:20.4px;height:10.7px"><svg width="20.4" height="10.7" viewBox="0 0 4 2" preserveAspectRatio="none" shape-rendering="crispEdges"><rect x="0" y="0" width="1.02" height="1.02" fill="rgb(237,237,238)"/><rect x="1" y="0" width="1.02" height="1.02" fill="rgb(224,224,225)"/><rect x="2" y="0" width="1.02" height="1.02" fill="rgb(223,223,224)"/><rect x="3" y="0" width="1.02" height="1.02" fill="rgb(231,231,232)"/><rect x="0" y="1" width="1.02" height="1.02" fill="rgb(240,240,241)"/><rect x="1" y="1" width="1.02" height="1.02" fill="rgb(236,236,237)"/><rect x="2" y="1" width="1.02" height="1.02" fill="rgb(231,231,232)"/><rect x="3" y="1" width="1.02" height="1.02" fill="rgb(234,234,235)"/></svg></div><div style="left:261.6px;top:300px;width:32.4px;height:5.5px"><svg width="32.4" height="5.5" viewBox="0 0 6 1" preserveAspectRatio="none" shape-rendering="crispEdges"><rect x="0" y="0" width="1.02" height="1.02" fill="rgb(217,217,218)"/><rect x="1" y="0" width="1.02" height="1.02" fill="rgb(207,207,208)"/><rect x="2" y="0" width="1.02" height="1.02" fill="rgb(196,196,197)"/><rect x="3" y="0" width="1.02" height="1.02" fill="rgb(210,210,211)"/><rect x="4" y="0" width="1.02" height="1.02" fill="rgb(207,207,208)"/><rect x="5" y="0" width="1.02" height="1.02" fill="rgb(201,201,202)"/></svg></div><div style="left:261.6px;top:309px;width:20.4px;height:8px"><svg width="20.4" height="8" viewBox="0 0 4 2" preserveAspectRatio="none" shape-rendering="crispEdges"><rect x="0" y="0" width="1.02" height="1.02" fill="rgb(225,225,226)"/><rect x="1" y="0" width="1.02" height="1.02" fill="rgb(237,237,238)"/><rect x="2" y="0" width="1.02" height="1.02" fill="rgb(223,223,224)"/><rect x="3" y="0" width="1.02" height="1.02" fill="rgb(228,228,229)"/><rect x="0" y="1" width="1.02" height="1.02" fill="rgb(231,231,232)"/><rect x="1" y="1" width="1.02" height="1.02" fill="rgb(226,226,227)"/><rect x="2" y="1" width="1.02" height="1.02" fill="rgb(229,229,230)"/><rect x="3" y="1" width="1.02" height="1.02" fill="rgb(234,234,235)"/></svg></div><div style="left:265.2px;top:325.5px;width:31.2px;height:12px"><svg width="31.2" height="12" viewBox="0 0 6 3" preserveAspectRatio="none" shape-rendering="crispEdges"><rect x="0" y="0" width="1.02" height="1.02" fill="rgb(234,234,235)"/><rect x="1" y="0" width="1.02" height="1.02" fill="rgb(237,237,238)"/><rect x="2" y="0" width="1.02" height="1.02" fill="rgb(224,224,225)"/><rect x="3" y="0" width="1.02" height="1.02" fill="rgb(227,227,228)"/><rect x="4" y="0" width="1.02" height="1.02" fill="rgb(236,236,237)"/><rect x="5" y="0" width="1.02" height="1.02" fill="rgb(234,234,235)"/><rect x="0" y="1" width="1.02" height="1.02" fill="rgb(239,239,240)"/><rect x="1" y="1" width="1.02" height="1.02" fill="rgb(230,230,231)"/><rect x="2" y="1" width="1.02" height="1.02" fill="rgb(226,226,227)"/><rect x="3" y="1" width="1.02" height="1.02" fill="rgb(235,235,236)"/><rect x="4" y="1" width="1.02" height="1.02" fill="rgb(239,239,240)"/><rect x="5" y="1" width="1.02" height="1.02" fill="rgb(230,230,231)"/><rect x="0" y="2" width="1.02" height="1.02" fill="rgb(235,235,236)"/><rect x="1" y="2" width="1.02" height="1.02" fill="rgb(233,233,234)"/><rect x="2" y="2" width="1.02" height="1.02" fill="rgb(234,234,235)"/><rect x="3" y="2" width="1.02" height="1.02" fill="rgb(229,229,230)"/><rect x="4" y="2" width="1.02" height="1.02" fill="rgb(226,226,227)"/><rect x="5" y="2" width="1.02" height="1.02" fill="rgb(224,224,225)"/></svg></div><div style="left:265.2px;top:337.5px;width:8.4px;height:11.5px"><svg width="8.4" height="11.5" viewBox="0 0 2 3" preserveAspectRatio="none" shape-rendering="crispEdges"><rect x="0" y="0" width="1.02" height="1.02" fill="rgb(227,227,228)"/><rect x="1" y="0" width="1.02" height="1.02" fill="rgb(226,226,227)"/><rect x="0" y="1" width="1.02" height="1.02" fill="rgb(229,229,230)"/><rect x="1" y="1" width="1.02" height="1.02" fill="rgb(229,229,230)"/><rect x="0" y="2" width="1.02" height="1.02" fill="rgb(222,222,223)"/><rect x="1" y="2" width="1.02" height="1.02" fill="rgb(237,237,238)"/></svg></div><div style="left:265.2px;top:361px;width:31.2px;height:4.8px"><svg width="31.2" height="4.8" viewBox="0 0 6 1" preserveAspectRatio="none" shape-rendering="crispEdges"><rect x="0" y="0" width="1.02" height="1.02" fill="rgb(222,222,223)"/><rect x="1" y="0" width="1.02" height="1.02" fill="rgb(214,214,215)"/><rect x="2" y="0" width="1.02" height="1.02" fill="rgb(201,201,202)"/><rect x="3" y="0" width="1.02" height="1.02" fill="rgb(204,204,205)"/><rect x="4" y="0" width="1.02" height="1.02" fill="rgb(205,205,206)"/><rect x="5" y="0" width="1.02" height="1.02" fill="rgb(196,196,197)"/></svg></div><div style="left:265.2px;top:369.7px;width:30.0px;height:7px"><svg width="30.0" height="7" viewBox="0 0 6 2" preserveAspectRatio="none" shape-rendering="crispEdges"><rect x="0" y="0" width="1.02" height="1.02" fill="rgb(226,226,227)"/><rect x="1" y="0" width="1.02" height="1.02" fill="rgb(235,235,236)"/><rect x="2" y="0" width="1.02" height="1.02" fill="rgb(239,239,240)"/><rect x="3" y="0" width="1.02" height="1.02" fill="rgb(233,233,234)"/><rect x="4" y="0" width="1.02" height="1.02" fill="rgb(240,240,241)"/><rect x="5" y="0" width="1.02" height="1.02" fill="rgb(232,232,233)"/><rect x="0" y="1" width="1.02" height="1.02" fill="rgb(226,226,227)"/><rect x="1" y="1" width="1.02" height="1.02" fill="rgb(238,238,239)"/><rect x="2" y="1" width="1.02" height="1.02" fill="rgb(223,223,224)"/><rect x="3" y="1" width="1.02" height="1.02" fill="rgb(236,236,237)"/><rect x="4" y="1" width="1.02" height="1.02" fill="rgb(239,239,240)"/><rect x="5" y="1" width="1.02" height="1.02" fill="rgb(234,234,235)"/></svg></div><div style="left:265.2px;top:384.8px;width:31.2px;height:11px"><svg width="31.2" height="11" viewBox="0 0 6 2" preserveAspectRatio="none" shape-rendering="crispEdges"><rect x="0" y="0" width="1.02" height="1.02" fill="rgb(234,234,235)"/><rect x="1" y="0" width="1.02" height="1.02" fill="rgb(234,234,235)"/><rect x="2" y="0" width="1.02" height="1.02" fill="rgb(234,234,235)"/><rect x="3" y="0" width="1.02" height="1.02" fill="rgb(225,225,226)"/><rect x="4" y="0" width="1.02" height="1.02" fill="rgb(237,237,238)"/><rect x="5" y="0" width="1.02" height="1.02" fill="rgb(234,234,235)"/><rect x="0" y="1" width="1.02" height="1.02" fill="rgb(223,223,224)"/><rect x="1" y="1" width="1.02" height="1.02" fill="rgb(228,228,229)"/><rect x="2" y="1" width="1.02" height="1.02" fill="rgb(224,224,225)"/><rect x="3" y="1" width="1.02" height="1.02" fill="rgb(228,228,229)"/><rect x="4" y="1" width="1.02" height="1.02" fill="rgb(236,236,237)"/><rect x="5" y="1" width="1.02" height="1.02" fill="rgb(227,227,228)"/></svg></div><div style="left:265.2px;top:395.9px;width:10.8px;height:11px"><svg width="10.8" height="11" viewBox="0 0 2 2" preserveAspectRatio="none" shape-rendering="crispEdges"><rect x="0" y="0" width="1.02" height="1.02" fill="rgb(225,225,226)"/><rect x="1" y="0" width="1.02" height="1.02" fill="rgb(232,232,233)"/><rect x="0" y="1" width="1.02" height="1.02" fill="rgb(223,223,224)"/><rect x="1" y="1" width="1.02" height="1.02" fill="rgb(225,225,226)"/></svg></div><div style="left:265.2px;top:422px;width:31.2px;height:4.6px"><svg width="31.2" height="4.6" viewBox="0 0 6 1" preserveAspectRatio="none" shape-rendering="crispEdges"><rect x="0" y="0" width="1.02" height="1.02" fill="rgb(196,196,197)"/><rect x="1" y="0" width="1.02" height="1.02" fill="rgb(214,214,215)"/><rect x="2" y="0" width="1.02" height="1.02" fill="rgb(200,200,201)"/><rect x="3" y="0" width="1.02" height="1.02" fill="rgb(213,213,214)"/><rect x="4" y="0" width="1.02" height="1.02" fill="rgb(199,199,200)"/><rect x="5" y="0" width="1.02" height="1.02" fill="rgb(207,207,208)"/></svg></div><div style="left:265.2px;top:428px;width:13.2px;height:9px"><svg width="13.2" height="9" viewBox="0 0 2 2" preserveAspectRatio="none" shape-rendering="crispEdges"><rect x="0" y="0" width="1.02" height="1.02" fill="rgb(222,222,223)"/><rect x="1" y="0" width="1.02" height="1.02" fill="rgb(224,224,225)"/><rect x="0" y="1" width="1.02" height="1.02" fill="rgb(228,228,229)"/><rect x="1" y="1" width="1.02" height="1.02" fill="rgb(234,234,235)"/></svg></div>
<div style="left:849.0px;top:0px;width:9.0px;height:442px;background:#f6f6f6"></div>
<div style="left:845.64px;top:32.5px;width:4.2px;height:347px;border-radius:1.75px;background:#c9c9c9"></div>
<div style="left:850.8px;top:11.8px;width:6.0px;height:390px;border-radius:2.5px;background:#8a8a8a"></div>
<div class="arr" style="left:850.92px;top:2.6px;height:0px;border-bottom:5px solid #8a8a8a"></div>
<div class="arr" style="left:850.92px;top:434.9px;height:0px;border-top:5.2px solid #8a8a8a"></div>
</div>
<div style="position:absolute;left:714.9px;top:0;width:1.1px;height:442px;background:#000"></div></body></html>
